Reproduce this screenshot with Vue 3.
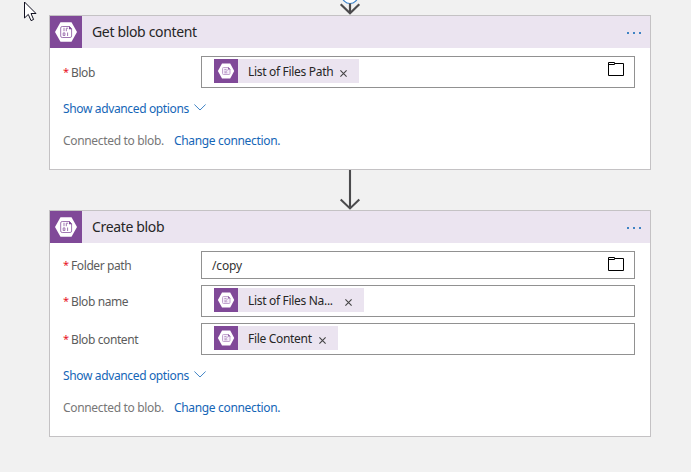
<script setup>
const cards = [
  {
    title: 'Get blob content',
    fields: [{ label: 'Blob', token: 'List of Files Path', kind: 'path', browse: true }],
  },
  {
    title: 'Create blob',
    fields: [
      { label: 'Folder path', text: '/copy', browse: true },
      { label: 'Blob name', token: 'List of Files Na...', kind: 'short' },
      { label: 'Blob content', token: 'File Content', kind: 'content' },
    ],
  },
]
</script>

<template>
  <main class="designer">
    <svg class="cursor" width="13" height="21" viewBox="0 0 13 21">
      <path d="M.5 1v16l3.8-3.6L7 19.6l2.6-1.1L7 12.5h5z" fill="#fff" stroke="#101020" />
    </svg>
    <template v-for="(card, i) in cards" :key="card.title">
      <svg v-if="i === 0" class="connector" width="24" height="15" viewBox="0 0 24 15">
        <circle cx="12" cy="-4.5" r="8" fill="#fff" stroke="#3b82c8" stroke-width="1.2" />
        <path d="M12 3.5v10M2.7 4.2l9.3 9 9.3-9" fill="none" stroke="#4b4b4d" stroke-width="2.2" />
      </svg>
      <svg v-else class="connector" width="24" height="40" viewBox="0 0 24 40">
        <path d="M12 0v38M2.7 29.4l9.3 9 9.3-9" fill="none" stroke="#4b4b4d" stroke-width="2.1" />
      </svg>
      <section class="card">
        <header class="head">
          <span class="badge">
            <svg width="32" height="32" viewBox="0 0 32 32">
              <path d="M10.5 6.2h11L27 16l-5.5 9.8h-11L5 16z" fill="#fff" />
              <path d="M12.2 10.5h7.3l2.1 2.1v7.4q0 1.5-1.5 1.5h-7.9q-1.5 0-1.5-1.5v-8q0-1.5 1.5-1.5z" fill="#fff" stroke="#a077b2" />
              <path d="M19 10v3.2h3.2z" fill="#804998" />
              <path d="M14 11.8v3.4M16.3 15.2v-3h1.9M13.2 16.9h1.7v2.6h-1.7zM17.6 16.5v3.5" fill="none" stroke="#9f75b1" />
            </svg>
          </span>
          <h2>{{ card.title }}</h2>
          <span class="dots"><i></i><i></i><i></i></span>
        </header>
        <div class="body">
          <div v-for="field in card.fields" :key="field.label" class="row">
            <label><b>*</b>{{ field.label }}</label>
            <div class="input" :class="{ plain: field.text }">
              <span v-if="field.text" class="value">{{ field.text }}</span>
              <span v-else class="token" :class="field.kind">
                <svg width="24" height="24" viewBox="0 0 24 24">
                  <path fill="#804998" d="M0 0h24v24H0z" />
                  <path d="M8 4.6h8.2l4 7.4-4 7.4H8L3.9 12z" fill="#fff" />
                  <path d="M9.5 8.5h5l1.5 1.5v4.5q0 1-1 1H9.5q-1 0-1-1v-5q0-1 1-1z" fill="#f6effa" stroke="#c2a5ce" />
                  <path d="M14 7.9v2.6h2.6z" fill="#8f5fa5" />
                  <path d="M10.3 10.5h2.2M10.3 12.2h1.4M10.3 13.8h3M13.8 10.5l-2.4 3" stroke="#ae89be" stroke-width=".8" />
                </svg>
                <span class="name">{{ field.token }}</span>
                <svg class="close" width="7" height="7" viewBox="0 0 7 7">
                  <path d="M.4.4l6.2 6.2M6.6.4L.4 6.6" stroke="#444" stroke-width="1.1" />
                </svg>
              </span>
              <svg v-if="field.browse" class="folder" width="16" height="14" viewBox="0 0 16 14">
                <path d="M.5.5h6v1h9v12H.5zM.5 2.5h6v-1" fill="none" stroke="#000" />
              </svg>
            </div>
          </div>
          <a class="advanced">
            <span>Show advanced options</span>
            <svg width="12" height="7" viewBox="0 0 12 7">
              <path d="M.4.5L6 6 11.6.5" fill="none" stroke="#4285c6" />
            </svg>
          </a>
          <p class="connection"><span>Connected to blob.</span><a>Change connection.</a></p>
        </div>
      </section>
    </template>
  </main>
</template>

<style>
body {
  margin: 0;
  background: #f1f1f1;
}
</style>

<style scoped>
.designer {
  position: relative;
  box-sizing: border-box;
  width: 691px;
  height: 472px;
  padding-left: 49px;
  overflow: hidden;
  background: #f1f1f1;
  font: 12px/16px "Noto Sans", "Open Sans", sans-serif;
  letter-spacing: -0.36px;
}
.cursor {
  position: absolute;
  left: 24px;
  top: 1px;
}
svg {
  display: block;
  flex: none;
}
.connector {
  margin-left: 289px;
}
.card {
  box-sizing: border-box;
  width: 602px;
  border: 1px solid #c4c2c4;
  background: #fff;
}
.head {
  display: flex;
  align-items: center;
  height: 32px;
  background: #ebe4f0;
}
.badge {
  width: 32px;
  height: 32px;
  background: #804998;
}
h2 {
  flex: 1;
  margin: 0 0 0 10px;
  font-size: 14px;
  line-height: 20px;
  font-weight: 400;
  letter-spacing: -0.34px;
  color: #262626;
}
.dots {
  display: flex;
  gap: 4px;
  margin: 2px 9px 0 0;
}
.dots i {
  width: 2px;
  height: 2px;
  background: #3f83c4;
}
.body {
  padding: 8px 15px 20px 13px;
}
.row {
  display: flex;
  align-items: center;
  margin-bottom: 6px;
}
label {
  display: flex;
  width: 138px;
  padding-top: 2px;
  color: #5c5c5c;
  letter-spacing: -0.4px;
}
label b {
  width: 8px;
  margin-top: -1px;
  font-weight: 400;
  font-size: 11px;
  color: #e81123;
}
.input {
  display: flex;
  align-items: flex-start;
  box-sizing: border-box;
  width: 434px;
  height: 32px;
  padding: 2px 10px 0 12px;
  border: 1px solid #919191;
}
.plain {
  height: 28px;
  padding-left: 10px;
}
.value {
  margin-top: 4px;
  letter-spacing: -0.15px;
  color: #333;
}
.token {
  display: flex;
  align-items: center;
  box-sizing: border-box;
  height: 24px;
  background: #ebe4f0;
  color: #262626;
}
.path {
  width: 145px;
}
.short {
  width: 150px;
}
.content {
  width: 124px;
}
.name {
  margin-left: 10px;
  padding-top: 2px;
  white-space: nowrap;
  letter-spacing: -0.31px;
}
.token .close {
  margin: 4px 12px 0 auto;
}
.folder {
  margin: 3px 0 0 auto;
}
.advanced {
  display: flex;
  gap: 5px;
  margin-top: 13px;
  color: #1566b7;
}
.advanced svg {
  margin-top: 3px;
}
.connection {
  display: flex;
  gap: 10px;
  margin: 16px 0 0;
  color: #777;
  letter-spacing: -0.33px;
}
.connection a {
  color: #1566b7;
}
</style>
